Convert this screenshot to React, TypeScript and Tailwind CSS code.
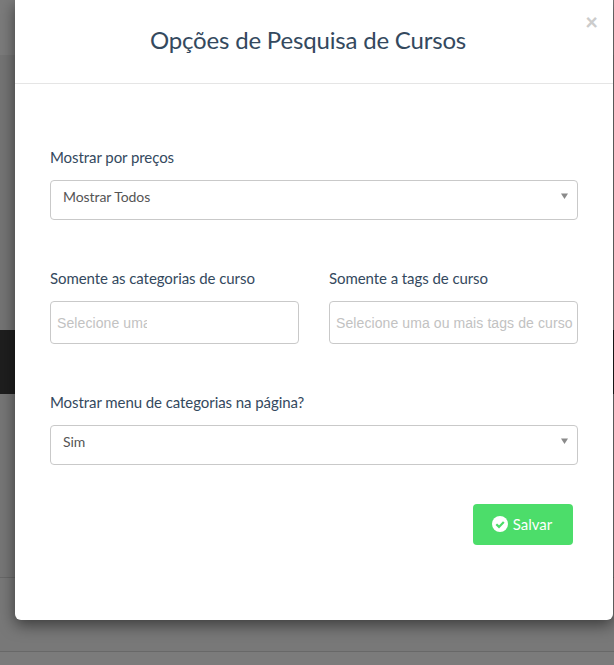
import React from 'react';

const SelectBox = ({ value, className }: { value: string; className: string }) => (
  <div className={`flex justify-between rounded-[4px] border border-[#c9c9c9] pl-3 pr-[8px] pt-[6px] text-[14px] leading-[20px] text-[#555] ${className}`}>
    <span>{value}</span>
    <svg width="9" height="7" viewBox="0 0 9 7" className="mt-[6px]">
      <path d="M1 0.5H8L4.5 6Z" fill="#8a8a8a" />
    </svg>
  </div>
);

const TagInput = ({ placeholder, inputWidth }: { placeholder: string; inputWidth: string }) => (
  <div className="flex h-[43px] w-[249px] items-center rounded-[4px] border border-[#c9c9c9] pl-[6px]">
    <input
      readOnly
      placeholder={placeholder}
      className={`${inputWidth} bg-transparent font-['Liberation_Sans',sans-serif] text-[14px] tracking-[0.09px] outline-none placeholder:text-[#c2c2c2]`}
    />
  </div>
);

export default function App() {
  return (
    <div className="relative h-[665px] w-[614px] overflow-hidden bg-[#777777] font-['Lato',sans-serif]">
      {/* page behind the backdrop */}
      <div className="flex h-full flex-col">
        <div className="h-[55px] bg-[#7b7b7b]" />
        <div className="h-[275px] bg-[#747474]" />
        <div className="h-[64px] bg-[#1e1e1e]" />
        <div className="h-[183px] bg-[#767676]" />
        <div className="h-px bg-[#686868]" />
        <div className="h-[73px] bg-[#787878]" />
        <div className="h-px bg-[#686868]" />
        <div className="flex-1 bg-[#7b7b7b]" />
      </div>

      {/* modal */}
      <div className="absolute left-[15px] top-0 h-[620px] w-[598px] rounded-b-[6px] bg-white shadow-[0_5px_15px_rgba(0,0,0,0.5)]">
        <div className="relative h-[84px] border-b border-[#e5e5e5] pr-[12px] pt-[25px] text-center">
          <h4 className="text-[24px] leading-[30px] tracking-[-0.18px] text-[#34495e]">Opções de Pesquisa de Cursos</h4>
          <span className="absolute right-[15px] top-[11px] text-[22px] font-black leading-[21px] text-[#cccccc]">×</span>
        </div>

        <div className="flex flex-col px-[35px] pt-[63px] text-[15px] leading-[20px] tracking-[-0.07px] text-[#34495e]">
          <label className="mb-[13px]">Mostrar por preços</label>
          <SelectBox value="Mostrar Todos" className="h-[40px]" />

          <div className="mt-[48px] flex gap-[30px]">
            <div>
              <label className="mb-[13px] block">Somente as categorias de curso</label>
              <TagInput placeholder="Selecione uma ou mais categorias" inputWidth="w-[90px]" />
            </div>
            <div>
              <label className="mb-[13px] block">Somente a tags de curso</label>
              <TagInput placeholder="Selecione uma ou mais tags de curso" inputWidth="w-[237px]" />
            </div>
          </div>

          <label className="mb-[13px] mt-[48px]">Mostrar menu de categorias na página?</label>
          <SelectBox value="Sim" className="h-[40px]" />

          <div className="mt-[39px] flex justify-end pr-[5px]">
            <button className="flex h-[41px] w-[100px] items-center justify-center gap-[5px] rounded-[4px] bg-[#4cdd6a] pb-[2px] pr-[2px] text-[15px] tracking-normal text-white">
              <svg width="16" height="16" viewBox="0 0 16 16">
                <circle cx="8" cy="8" r="8" fill="#fff" />
                <path d="M4.3 8.2 7 10.9 11.8 6" fill="none" stroke="#4cdd6a" strokeWidth="2.2" />
              </svg>
              Salvar
            </button>
          </div>
        </div>
      </div>
    </div>
  );
}
